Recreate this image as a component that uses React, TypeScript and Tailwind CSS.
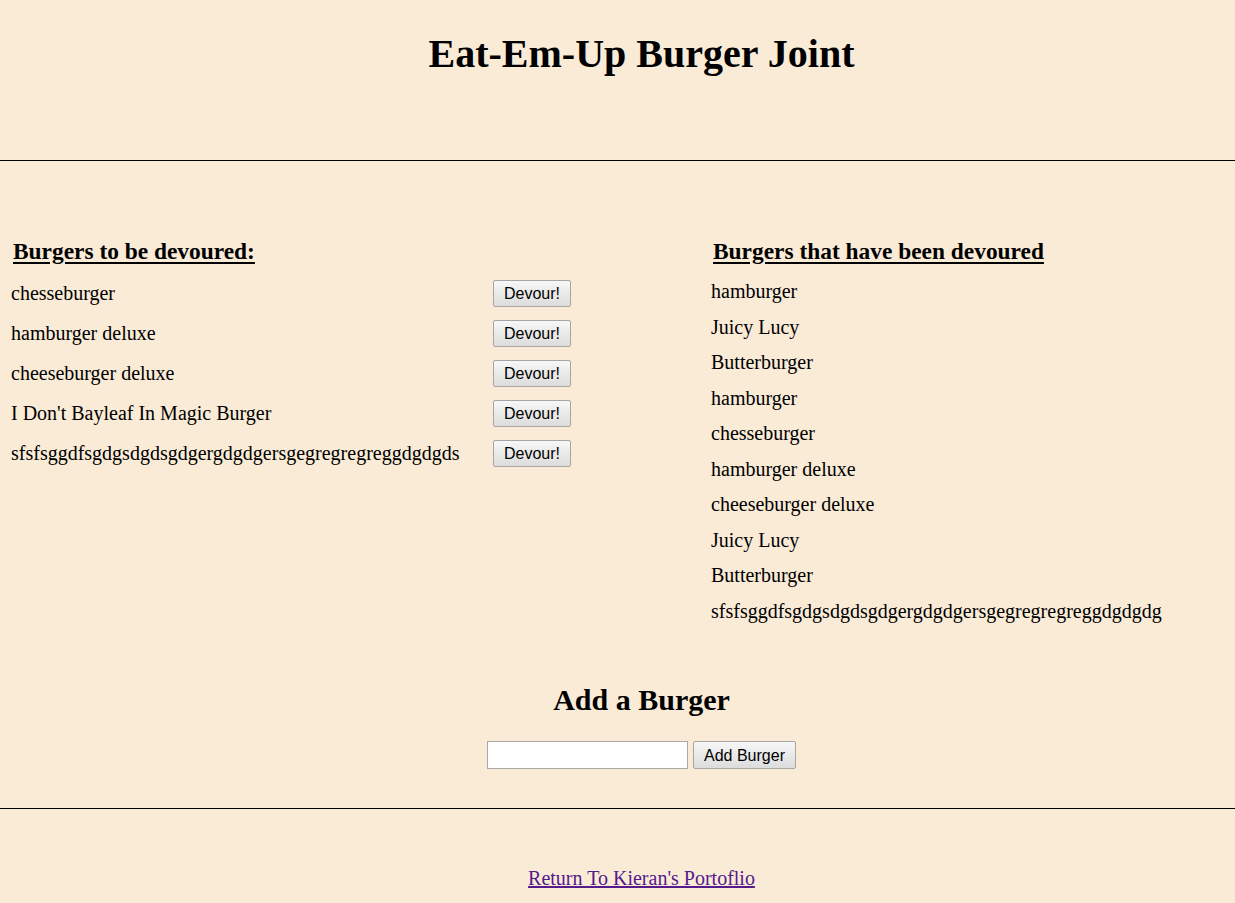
const toDevour = [
  'chesseburger',
  'hamburger deluxe',
  'cheeseburger deluxe',
  "I Don't Bayleaf In Magic Burger",
  'sfsfsggdfsgdgsdgdsgdgergdgdgersgegregregreggdgdgds',
];

const devoured = [
  'hamburger',
  'Juicy Lucy',
  'Butterburger',
  'hamburger',
  'chesseburger',
  'hamburger deluxe',
  'cheeseburger deluxe',
  'Juicy Lucy',
  'Butterburger',
  'sfsfsggdfsgdgsdgdsgdgergdgdgersgegregregreggdgdgdg',
];

const btn =
  "font-['Liberation_Sans',Arial,sans-serif] text-[16px] leading-[19px] px-[10px] py-[3px] border border-[#a6a6a6] rounded-[2px] bg-gradient-to-b from-[#f7f7f7] to-[#dcdcdc] text-black";

export default function App() {
  return (
    <div className="min-h-[903px] bg-[#faebd7] text-black font-['Liberation_Serif','Times_New_Roman',serif] text-[20px]">
      <header className="h-[160px] pl-[48px] pt-[31px]">
        <h1 className="text-center text-[40px] font-bold leading-[46px]">Eat-Em-Up Burger Joint</h1>
      </header>
      <hr className="border-black" />

      <main className="flex pt-[77px]">
        <section className="w-[711px] pl-[11px]">
          <h3 className="pl-[2px] text-[23.4px] font-bold leading-[26px] underline underline-offset-[3px]">
            Burgers to be devoured:
          </h3>
          <ul className="mt-[9px]">
            {toDevour.map((name) => (
              <li key={name} className="flex h-[40px] items-center">
                <span className="w-[482px] leading-[23px]">{name}</span>
                <button className={btn}>Devour!</button>
              </li>
            ))}
          </ul>
        </section>

        <section className="flex-1">
          <h3 className="pl-[2px] text-[23.4px] font-bold leading-[26px] underline underline-offset-[3px]">
            Burgers that have been devoured
          </h3>
          <ul className="mt-[17px]">
            {devoured.map((name, i) => (
              <li key={i} className="mb-[15px] leading-[20.5px]">
                {name}
              </li>
            ))}
          </ul>
        </section>
      </main>

      <div className="pl-[48px] pt-[46px] text-center">
        <h2 className="text-[30px] font-bold leading-[35px]">Add a Burger</h2>
        <form className="mt-[24px] flex justify-center gap-[5px]" onSubmit={(e) => e.preventDefault()}>
          <input
            type="text"
            className="h-[28px] w-[201px] border border-[#a9a9a9] bg-white px-[2px]"
          />
          <button className={btn + ' h-[28px]'}>Add Burger</button>
        </form>
      </div>

      <hr className="mt-[39px] border-black" />

      <footer className="pl-[48px] pt-[54px] pb-[13px] text-center">
        <a href="#" className="leading-[23px] text-[#551a8b] underline">
          Return To Kieran's Portoflio
        </a>
      </footer>
    </div>
  );
}
